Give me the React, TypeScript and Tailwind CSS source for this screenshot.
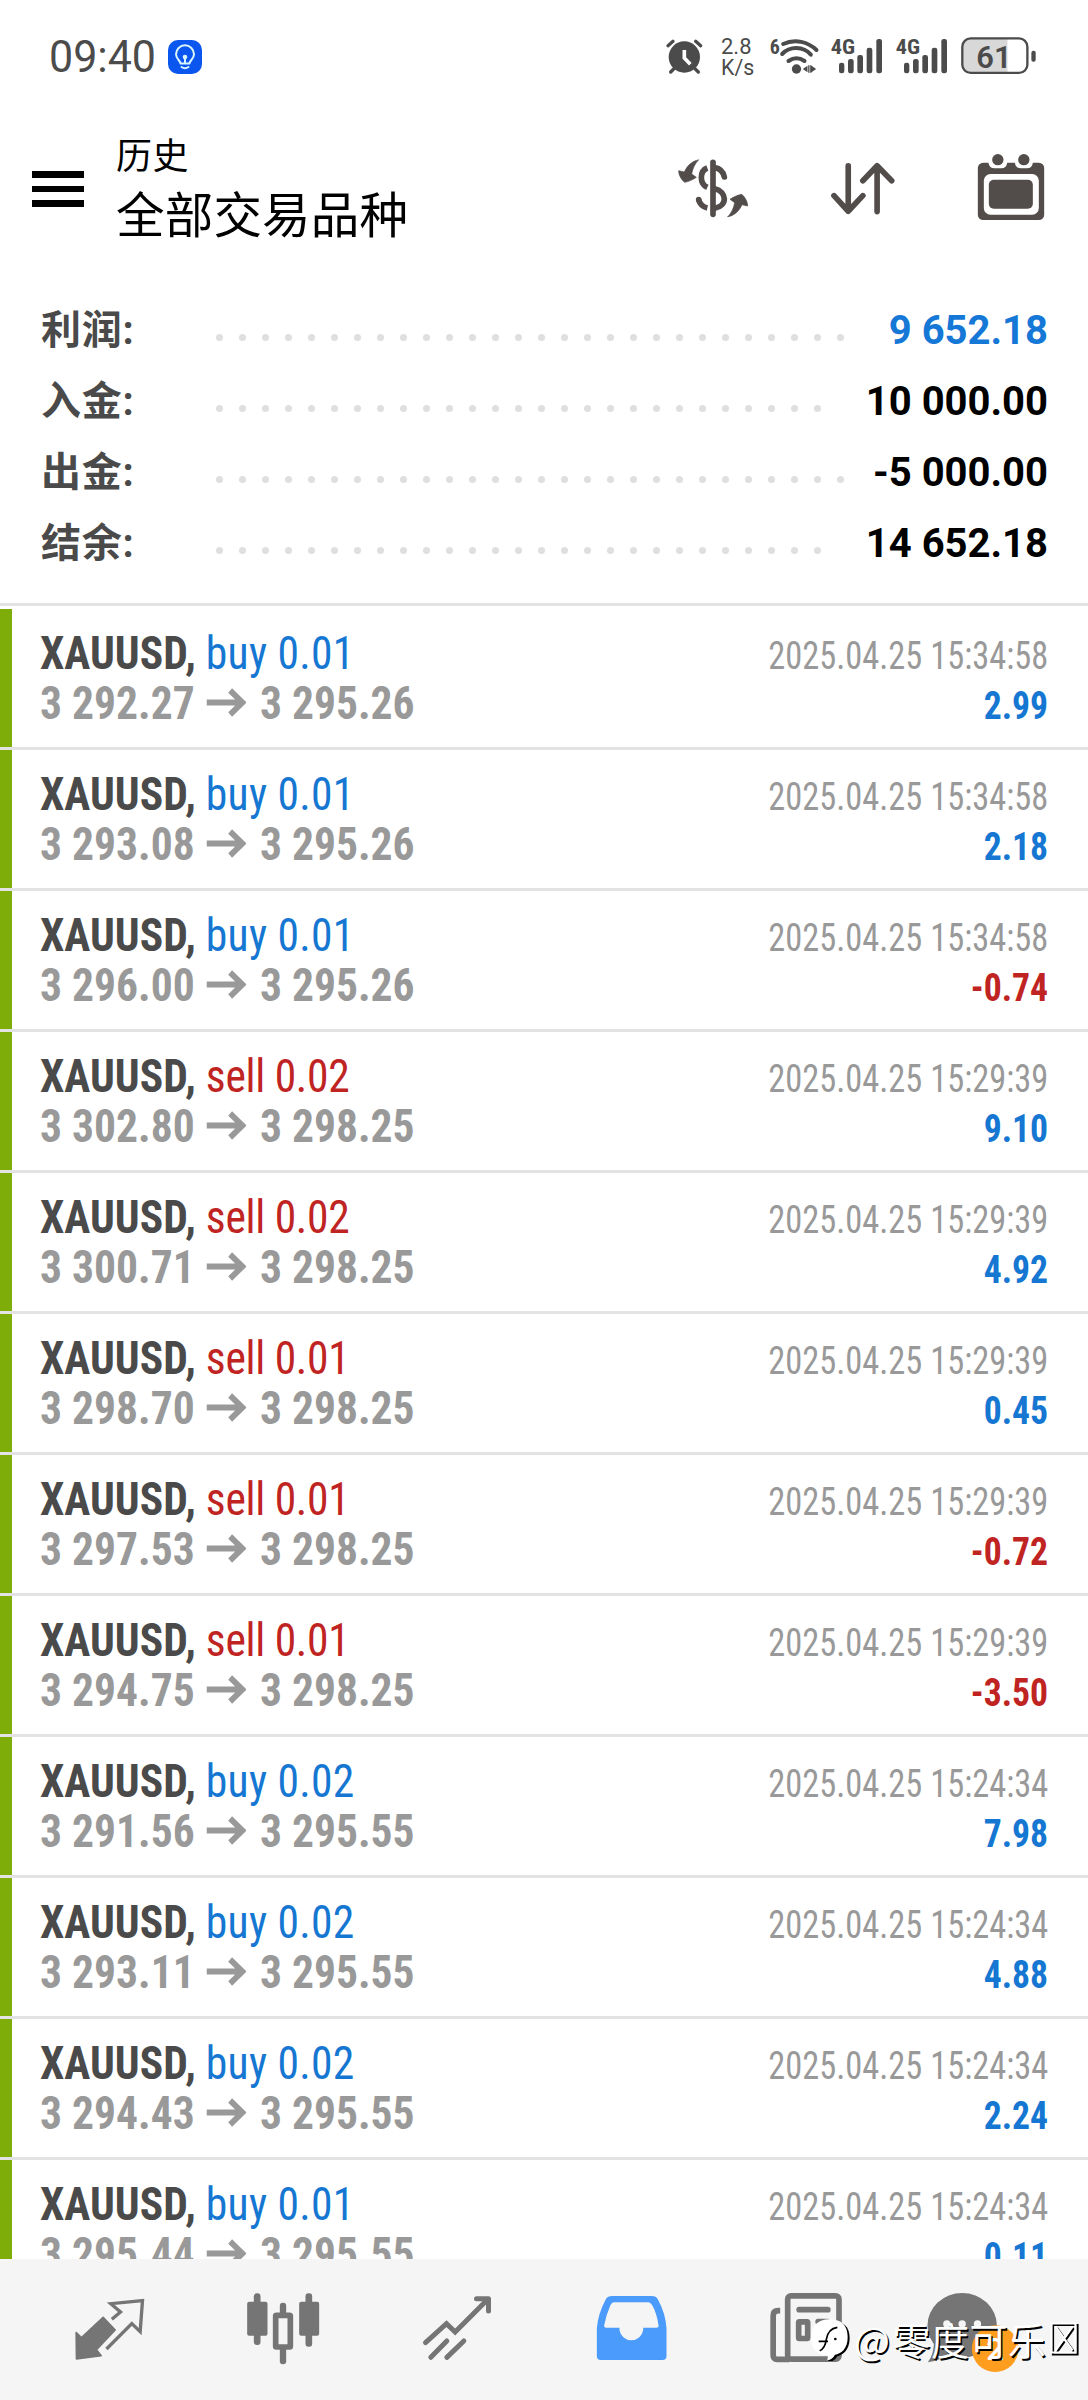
import { ReactNode } from "react";

type Deal = {
  side: "buy" | "sell";
  volume: string;
  open: string;
  close: string;
  time: string;
  profit: string;
};

const summary = [
  { label: "利润:", value: "9 652.18", dots: 28, color: "text-[#1577d6]" },
  { label: "入金:", value: "10 000.00", dots: 27, color: "text-black" },
  { label: "出金:", value: "-5 000.00", dots: 28, color: "text-black" },
  { label: "结余:", value: "14 652.18", dots: 27, color: "text-black" },
];

const deals: Deal[] = [
  { side: "buy", volume: "0.01", open: "3 292.27", close: "3 295.26", time: "2025.04.25 15:34:58", profit: "2.99" },
  { side: "buy", volume: "0.01", open: "3 293.08", close: "3 295.26", time: "2025.04.25 15:34:58", profit: "2.18" },
  { side: "buy", volume: "0.01", open: "3 296.00", close: "3 295.26", time: "2025.04.25 15:34:58", profit: "-0.74" },
  { side: "sell", volume: "0.02", open: "3 302.80", close: "3 298.25", time: "2025.04.25 15:29:39", profit: "9.10" },
  { side: "sell", volume: "0.02", open: "3 300.71", close: "3 298.25", time: "2025.04.25 15:29:39", profit: "4.92" },
  { side: "sell", volume: "0.01", open: "3 298.70", close: "3 298.25", time: "2025.04.25 15:29:39", profit: "0.45" },
  { side: "sell", volume: "0.01", open: "3 297.53", close: "3 298.25", time: "2025.04.25 15:29:39", profit: "-0.72" },
  { side: "sell", volume: "0.01", open: "3 294.75", close: "3 298.25", time: "2025.04.25 15:29:39", profit: "-3.50" },
  { side: "buy", volume: "0.02", open: "3 291.56", close: "3 295.55", time: "2025.04.25 15:24:34", profit: "7.98" },
  { side: "buy", volume: "0.02", open: "3 293.11", close: "3 295.55", time: "2025.04.25 15:24:34", profit: "4.88" },
  { side: "buy", volume: "0.02", open: "3 294.43", close: "3 295.55", time: "2025.04.25 15:24:34", profit: "2.24" },
  { side: "buy", volume: "0.01", open: "3 295.44", close: "3 295.55", time: "2025.04.25 15:24:34", profit: "0.11" },
];

const Signal = () => (
  <svg viewBox="525 0 195 162" className="w-[65px] h-[54px]" fill="#4b4b4b">
    <text x="536" y="72" fontSize="62" fontWeight="700" textLength="73" lengthAdjust="spacingAndGlyphs" className="font-['Roboto_Condensed',Roboto,sans-serif]">
      4G
    </text>
    <rect x="561" y="98" width="16" height="32" rx="7" />
    <rect x="588" y="87" width="17" height="43" rx="7" />
    <rect x="616" y="75" width="17" height="55" rx="7" />
    <rect x="644" y="53" width="17" height="77" rx="7" />
    <rect x="673" y="27" width="17" height="103" rx="7" />
  </svg>
);

const StatusBar = () => (
  <div className="h-[114px] flex items-center justify-between pl-[49px] text-[#4b4b4b]">
    <div className="flex items-center">
      <span className="w-[119px]">
        <span className="inline-block origin-left scale-x-[0.955] text-[45px] leading-[54px] font-[450]">09:40</span>
      </span>
      <svg viewBox="0 0 34 34" className="w-[34px] h-[34px]">
        <rect width="34" height="34" rx="10" fill="#0b56ee" />
        <g fill="none" stroke="#d9f6ff" strokeWidth="2" strokeLinecap="round">
          <path d="M12.5 23.5C12.5 20.5 8 19 8 14.3a9 9 0 0 1 18 0c0 4.700-4.500 6.200-4.500 9.200z" strokeLinejoin="round" />
          <path d="M13.500 27q3.500 2.500 7 0M17 23v-6" />
        </g>
        <circle cx="17" cy="17" r="2.300" fill="#d9f6ff" />
      </svg>
    </div>
    <div className="flex items-center pr-[48px]">
      {/* 闹钟 */}
      <svg viewBox="30 0 150 162" className="w-[50px] h-[54px]" fill="none" stroke="#4b4b4b" strokeWidth="10" strokeLinecap="round">
        <circle cx="97" cy="81" r="47" fill="#4b4b4b" stroke="none" />
        <path d="M48 47l15-13M146 47l-15-13M56 126l14-14M139 126l-14-14" />
        <path d="M97 60v24l18 19" stroke="#fff" strokeLinecap="butt" strokeWidth="11" />
      </svg>
      <div className="w-[53px] pl-[9px] text-[22px] leading-[21px] font-[450]">
        <p>2.8</p>
        <p className="origin-left scale-x-[0.97]">K/s</p>
      </div>
      {/* Wi-Fi */}
      <svg viewBox="340 0 185 162" className="w-[62px] h-[54px]" fill="none" stroke="#4b4b4b" strokeWidth="12" strokeLinecap="round">
        <text x="354" y="72" fontSize="60" fontWeight="700" fill="#4b4b4b" stroke="none" className="font-['Roboto_Condensed',Roboto,sans-serif]">
          6
        </text>
        <path d="M394 42C430 25 469 36 494 60M391 72C414 48 454 48 477 74M410 93Q434 76 458 93" />
        <circle cx="434" cy="117" r="14" fill="#4b4b4b" stroke="none" />
        <path d="M453 117l14-10v20zM493 117l-14-10v20zM469 106h4v22h-4zM475 106h4v22h-4z" fill="#4b4b4b" stroke="none" />
      </svg>
      <Signal />
      <Signal />
      {/* 电池 */}
      <svg viewBox="915 0 250 162" className="w-[83px] h-[54px]" fill="#4b4b4b">
        <path d="M957 25H1067V129H957Q931 129 931 103V51Q931 25 957 25Z" fill="#d8d8d8" />
        <rect x="931" y="25" width="196" height="104" rx="25" fill="none" stroke="#4b4b4b" strokeWidth="7" />
        <rect x="1139" y="62" width="13" height="33" rx="6" />
        <text x="973" y="114" fontSize="93" fontWeight="600" className="font-[Roboto,sans-serif]">
          61
        </text>
      </svg>
    </div>
  </div>
);

const Header = () => (
  <header className="h-[146px] flex items-center pl-[32px] pr-[38px]">
    <div className="w-[84px] pt-1 flex flex-col gap-[8px]">
      <span className="block w-[52px] h-[6.500px] bg-black" />
      <span className="block w-[52px] h-[6.500px] bg-black" />
      <span className="block w-[52px] h-[6.500px] bg-black" />
    </div>
    <div className="flex-1 text-black">
      <p className="text-[36px] leading-[59px] tracking-[0.500px]">历史</p>
      <h1 className="text-[48.500px] leading-[59px] tracking-[0.200px]">全部交易品种</h1>
    </div>
    <div className="flex items-center gap-[73px]">
      {/* 货币筛选 */}
      <svg viewBox="40 0 240 252" className="w-[80px] h-[84px]" fill="none" stroke="#524c4a" strokeWidth="17" strokeLinecap="round">
        <path d="M157 52v156" />
        <path d="M140 69C116 78 116 116 140 127M140 189Q119 184 114 164" strokeLinecap="butt" />
        <circle cx="114" cy="164" r="8.500" fill="#524c4a" stroke="none" />
        <path d="M162 68Q186 72 191 96M162 131C199 140 202 182 162 190" />
        <g fill="#524c4a" stroke="#524c4a" strokeWidth="2" strokeLinejoin="round">
          <path d="M113 45C96 47 79 62 71 81L54 77C54 90 62 104 72 112C84 110 97 104 107 97L93 87C96 70 103 56 113 45Z" />
          <path d="M202 215C219 213 236 198 244 179L261 183C261 170 253 156 243 148C231 150 218 156 208 163L222 173C219 190 212 204 202 215Z" />
        </g>
      </svg>
      {/* 排序 */}
      <svg viewBox="500 0 220 252" className="w-[73px] h-[84px]" fill="none" stroke="#524c4a" strokeWidth="17" strokeLinecap="round" strokeLinejoin="round">
        <path d="M564 62V198M521 152L564 199L608 152M651 200V62M608 107L651 62L695 107" />
      </svg>
      {/* 日期 */}
      <svg viewBox="940 0 230 252" className="w-[77px] h-[84px]" fill="#524c4a">
        <rect x="954" y="53" width="199" height="172" rx="16" />
        <path d="M986 40V54Q988 70 1004 70H1024Q1040 70 1042 54V40ZM1065 40V54Q1067 70 1083 70H1101Q1117 70 1119 54V40Z" fill="#fff" />
        <circle cx="1014" cy="44" r="17" />
        <circle cx="1092" cy="44" r="17" />
        <rect x="972" y="87" width="165" height="122" rx="20" fill="#fff" />
        <rect x="987" y="104" width="132" height="87" rx="15" />
      </svg>
    </div>
  </header>
);

const DealRow = ({ deal }: { deal: Deal }) => (
  <li className="h-[141px] border-b-[3px] border-b-[#e3e3e3] flex">
    <div className="w-[12px] bg-[#7eac08]" />
    <div className="flex-1 flex justify-between pl-[28px] pr-[40px] font-['Roboto_Condensed',Roboto,sans-serif]">
      <div className="pt-[19px] text-[46px] leading-[50px] origin-left scale-x-[0.946] whitespace-nowrap">
        <p className="font-bold text-[#4a4a4a]">
          XAUUSD,{" "}
          <span
            className={
              deal.side === "buy"
                ? "font-[450] tracking-[0.300px] text-[#1577d2]"
                : "font-[450] tracking-[-0.300px] text-[#bf2423]"
            }
          >
            {deal.side} {deal.volume}
          </span>
        </p>
        <p className="flex items-center font-bold text-[#999999]">
          {deal.open}
          <svg viewBox="0 0 42 30" className="w-[42px] h-[30px] ml-[13px] mr-[14px]" fill="none" stroke="#999999" strokeWidth="6">
            <path d="M0 14.500H38M25 2.500L38 14.500L25 26.500" />
          </svg>
          {deal.close}
        </p>
      </div>
      <div className="pt-[22px] text-[38px] leading-[50px] text-right whitespace-nowrap">
        <p className="origin-right scale-x-[0.905] font-[430] text-[#999999]">{deal.time}</p>
        <p
          className={`origin-right scale-x-[0.938] font-bold ${
            deal.profit.startsWith("-") ? "text-[#bf2423]" : "text-[#1577d2]"
          }`}
        >
          {deal.profit}
        </p>
      </div>
    </div>
  </li>
);

const NavItem = ({ children }: { children: ReactNode }) => (
  <button className="flex justify-center items-center">{children}</button>
);

const BottomNav = () => (
  <nav className="h-[141px] shrink-0 grid grid-cols-6 px-[22px] bg-[#f5f5f5]">
    <NavItem>
      <svg viewBox="28.500 0 240 297" className="w-[80px] h-[99px]" fill="none" stroke="#757575" strokeWidth="10">
        <path d="M131 112L167 150L111 209L125 227L51 237L50 158L66 173Z" fill="#757575" stroke="#757575" strokeWidth="5" strokeLinejoin="round" />
        <path d="M157 118L183 96L154 71L249 62L242 155L217 131L141 207" strokeLinecap="butt" />
      </svg>
    </NavItem>
    <NavItem>
      <svg viewBox="550.500 0 240 297" className="w-[80px] h-[99px]" fill="#757575">
        <rect x="563" y="65" width="61" height="102" rx="6" />
        <rect x="583" y="40" width="20" height="155" rx="9" />
        <rect x="719" y="65" width="60" height="102" rx="6" />
        <rect x="738" y="40" width="20" height="160" rx="9" />
        <rect x="661" y="68" width="19" height="45" rx="9" />
        <rect x="661" y="200" width="19" height="53" rx="9" />
        <rect x="648.500" y="106" width="44" height="95" rx="2" fill="#f5f5f5" stroke="#757575" strokeWidth="17" strokeLinejoin="round" />
      </svg>
    </NavItem>
    <NavItem>
      <svg viewBox="1072.500 0 240 297" className="w-[80px] h-[99px]" fill="none" stroke="#757575" strokeWidth="15" strokeLinecap="round">
        <path d="M1098 188L1161 131L1187 156L1282 61M1114 232L1162 183M1162 232L1213 183" />
        <path d="M1251 56H1287V93" strokeWidth="15" strokeLinejoin="round" />
        <path d="M1270 60H1286V78Z" fill="#757575" stroke="none" />
      </svg>
    </NavItem>
    <NavItem>
      <svg viewBox="142.500 0 240 297" className="w-[80px] h-[99px]" fill="#4a9bfb">
        <path
          fillRule="evenodd"
          d="M206 48H325Q338 48 343 58Q366 100 369 145V228Q369 240 357 240H172Q160 240 160 228V145Q164 100 187 58Q192 48 206 48ZM211 67Q205 67 201 75Q189 102 182 136Q181 143 188 143H228V151A36 36 0 0 0 299 151V143H338Q347 143 345 136Q340 102 328 79Q321 67 314 67Z"
        />
      </svg>
    </NavItem>
    <NavItem>
      <svg viewBox="46.500 0 240 297" className="w-[80px] h-[99px]" fill="none" stroke="#757575" strokeWidth="17">
        <rect x="114.500" y="47.500" width="154" height="190" rx="10" />
        <path d="M92 92H86Q71 92 71 107V226Q71 238 83 238H120" />
        <path d="M149 89H235M206 125H234M206 152H234" strokeLinecap="round" />
        <rect x="147.500" y="125.500" width="27" height="50" rx="2" />
      </svg>
    </NavItem>
    <NavItem>
      <svg viewBox="538.500 0 300 297" className="w-[100px] h-[99px] overflow-visible">
        <ellipse cx="638" cy="136" rx="104" ry="97" fill="#757575" />
        <path d="M554 185Q552 225 535 247Q575 240 600 222Z" fill="#757575" />
        <circle cx="592" cy="132" r="11" fill="#f5f5f5" />
        <circle cx="638" cy="132" r="11" fill="#f5f5f5" />
        <circle cx="684" cy="132" r="11" fill="#f5f5f5" />
        <circle cx="737" cy="206" r="70" fill="#ff9d1e" />
        <text x="737" y="240" fontSize="94" fontWeight="500" textAnchor="middle" fill="#fff" className="font-[Roboto,sans-serif]">
          2
        </text>
      </svg>
    </NavItem>
  </nav>
);

// 水印
const Watermark = () => (
  <div className="absolute left-[810px] top-[2317px] flex items-center text-white">
    <svg viewBox="180 111 126 132" className="w-[42px] h-[44px]">
      <path d="M245 123C282 123 299 141 299 175C299 213 275 226 262 229Q255 243 235 247V228Z" fill="#000" />
      <path d="M239 118C275 118 293 137 293 172C293 208 272 222 255 224Q248 238 232 241L234 226C202 228 183 205 183 172C183 138 204 118 239 118Z" fill="#fff" />
      <path d="M209 212Q225 206 229 178Q234 146 262 142M206 184H234" fill="none" stroke="#000" strokeWidth="5" />
      <circle cx="256" cy="177" r="4" fill="#000" />
    </svg>
    <span className="ml-[2px] text-[38px] leading-[42px] tracking-[0.500px] font-['Noto_Sans_CJK_SC',sans-serif] [text-shadow:1.500px_1.500px_0_#000]">
      <span className="mr-[2px]">@</span>零度可乐
    </span>
    <svg viewBox="0 0 29 34" className="w-[29px] h-[34px] ml-[4px]" fill="none" strokeWidth="2.200">
      <path d="M3 3H27.500V32.500H3ZM7 6L24 30M24 6L7 30" stroke="#000" />
      <path d="M1.500 1.500H25.500V30.500H1.500ZM5.500 4.500L22.500 28.500M22.500 4.500L5.500 28.500" stroke="#fff" />
    </svg>
  </div>
);

export default function App() {
  return (
    <div className="relative w-[1088px] h-[2400px] flex flex-col overflow-hidden bg-white font-[Roboto,'Noto_Sans_CJK_SC',sans-serif]">
      <StatusBar />
      <Header />

      {/* 汇总 */}
      <section className="pt-[35px] pb-[24px] pl-[41px] pr-[40px] border-b-[3px] border-b-[#e3e3e3]">
        {summary.map((item) => (
          <div key={item.label} className="h-[71px] flex items-center text-[40px] font-bold">
            <span className="w-[175px] tracking-[0.800px] text-[#4a4a4a]">{item.label}</span>
            <div className="flex-1 pt-[14px] flex gap-[16px]">
              {Array.from({ length: item.dots }, (_, i) => (
                <span key={i} className="size-[7px] shrink-0 rounded-full bg-[#dfdfdf]" />
              ))}
            </div>
            <span className={item.color}>{item.value}</span>
          </div>
        ))}
      </section>

      {/* 成交列表 */}
      <ul className="flex-1 min-h-0 overflow-hidden pt-[3px]">
        {deals.map((deal, index) => (
          <DealRow key={index} deal={deal} />
        ))}
      </ul>

      <BottomNav />
      <Watermark />
    </div>
  );
}
